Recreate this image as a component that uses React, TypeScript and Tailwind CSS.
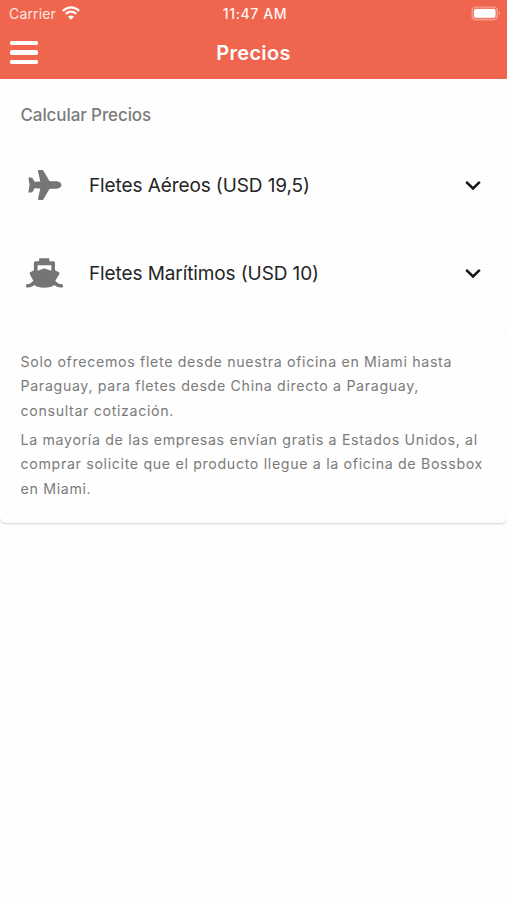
import React from "react";

function StatusBar() {
  return (
    <div className="flex h-[28px] items-center text-white/85">
      <div className="flex flex-1 items-center gap-[6px] pl-[9px]">
        <span className="text-[14px] leading-[28px] tracking-[0.15px]">Carrier</span>
        <svg viewBox="0 0 18 14" className="mb-[2px] h-[14px] w-[18px]" fill="none" stroke="white" strokeWidth="2.3">
          <path d="M0.9 4.8Q9 -2.1 17.1 4.8" />
          <path d="M3.8 7.8Q9 3.5 14.2 7.8" />
          <path d="M6 10.8Q9 8.4 12 10.8L9 13.8Z" fill="white" stroke="none" />
        </svg>
      </div>
      <span className="text-[14px] leading-[28px] font-medium tracking-[0.6px] text-white/95">11:47 AM</span>
      <div className="flex flex-1 justify-end pr-[6px]">
        <svg viewBox="0 0 30 15" className="mb-[1px] h-[15px] w-[30px]">
          <rect x="1" y="1" width="25.5" height="12.8" rx="3.6" fill="white" fillOpacity=".15" stroke="white" strokeOpacity=".35" strokeWidth="1.2" />
          <rect x="3" y="3" width="21.5" height="8.8" rx="1.8" fill="white" />
          <path d="M28 5.2Q30 7.4 28 9.6Z" fill="white" fillOpacity=".4" />
        </svg>
      </div>
    </div>
  );
}

function Plane() {
  return (
    <svg viewBox="0 0 40 32" className="h-[32px] w-[40px]" fill="currentColor">
      <path d="M14.8 1H18C18.8 1 19.2 1.4 19.6 2L25.6 12.2H32.5C35.6 12.4 37.5 14.2 37.5 16S35.6 19.6 32.5 19.8H25.6L19.6 30C19.2 30.6 18.8 31 18 31H14.8C14.1 31 13.8 30.5 14 29.8L16.3 19.6L10.6 19.2L8.6 22.8C8.2 23.3 7.8 23.5 7.2 23.5H5.3C4.6 23.5 4.3 23 4.5 22.4L5.6 16L4.5 9.6C4.3 9 4.6 8.5 5.3 8.5H7.2C7.8 8.5 8.2 8.7 8.6 9.2L10.6 12.8L16.3 12.4L14 2.2C13.8 1.5 14.1 1 14.8 1Z" />
    </svg>
  );
}

function Boat() {
  return (
    <svg viewBox="0 0 40 32" className="h-[32px] w-[40px]" fill="currentColor">
      <path
        fillRule="evenodd"
        d="M16 1.2H24.5Q25.4 1.2 25.4 2.1V4.3H29C30.4 4.3 31 4.9 31 6.3V13.3L34.8 15.2C35.6 15.7 35.7 16.4 35.2 17.2L31.3 23.8C33.3 26.3 35.6 27.3 38 27.3Q39 27.3 39 28.3V29.5Q39 30.5 38 30.5C35.3 30.5 32.6 29.8 30.2 27.9C27 31.6 13.6 31.6 10.4 27.9C8 29.8 5.3 30.5 3 30.5Q2 30.5 2 29.5V28.3Q2 27.3 3 27.3C5.3 27.3 7.3 26.3 9.3 23.8L5.9 17.2C5.4 16.4 5.5 15.7 6.3 15.2L9.9 13.3V6.3C9.9 4.9 10.6 4.3 12 4.3H15.1V2.1Q15.1 1.2 16 1.2ZM13.6 8.2V13.7L19.2 11.8Q20.3 11.4 21.4 11.8L27.3 13.7V8.2Z"
      />
    </svg>
  );
}

function Row({ icon, label }: { icon: React.ReactNode; label: string }) {
  return (
    <div className="flex h-[88px] items-center pr-[25px] pl-[24px]">
      <span className="flex w-[40px] text-[#757575]">{icon}</span>
      <span className="ml-[25px] flex-1 pt-[2px] text-[19px] tracking-[-0.1px] whitespace-nowrap text-[#252525]">{label}</span>
      <svg viewBox="0 0 18 12" className="h-[12px] w-[18px]" fill="none" stroke="#151515" strokeWidth="2.5">
        <path d="M2.2 2.9L9 9.5L15.8 2.9" />
      </svg>
    </div>
  );
}

export default function App() {
  return (
    <div className="h-[900px] w-full overflow-hidden bg-[#fefefe] font-[Inter,sans-serif]">
      <header className="h-[79px] bg-[#ef654e]">
        <StatusBar />
        <div className="grid h-[49px] grid-cols-3 items-center">
          <div className="ml-[10px] flex w-[28px] flex-col gap-[5px]">
            <i className="h-[4.5px] rounded-[1.5px] bg-white" />
            <i className="h-[4.5px] rounded-[1.5px] bg-white" />
            <i className="h-[4.5px] rounded-[1.5px] bg-white" />
          </div>
          <h1 className="text-center text-[20px] font-semibold tracking-[0.3px] text-white">Precios</h1>
        </div>
      </header>
      <main>
        <h2 className="h-[62px] pt-[24px] pl-[20.5px] text-[17px] leading-[25px] font-medium tracking-[-0.1px] text-[#7b7b7b]">Calcular Precios</h2>
        <Row icon={<Plane />} label="Fletes Aéreos (USD 19,5)" />
        <Row icon={<Boat />} label="Fletes Marítimos (USD 10)" />
        <section className="mt-[9px] h-[197px] rounded-[6px] bg-[#fefefe] pt-[23.7px] pl-[20.5px] text-[14.2px] leading-[24.4px] tracking-[0.67px] text-[#7b7b7b] shadow-[0_1px_2px_rgba(0,0,0,0.18)]">
          <p>
            Solo ofrecemos flete desde nuestra oficina en Miami hasta
            <br />
            Paraguay, para fletes desde China directo a Paraguay,
            <br />
            consultar cotización.
          </p>
          <p className="mt-[5px]">
            La mayoría de las empresas envían gratis a Estados Unidos, al
            <br />
            comprar solicite que el producto llegue a la oficina de Bossbox
            <br />
            en Miami.
          </p>
        </section>
      </main>
    </div>
  );
}
